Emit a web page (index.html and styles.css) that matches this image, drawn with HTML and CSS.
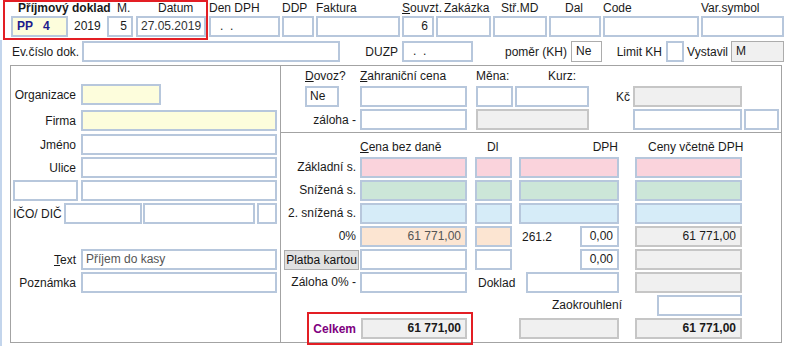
FILE: index.html
```html
<!DOCTYPE html>
<html lang="cs">
<head>
    <meta charset="UTF-8">
    <title>Příjmový doklad</title>
    <link rel="stylesheet" href="styles.css">
</head>
<body>
    <div class="top">
        <div class="doc">
            <span class="lbl title">Příjmový doklad</span>
            <span class="lbl mo">M.</span>
            <span class="lbl dt">Datum</span>
            <div class="f yel pp">PP&nbsp;&nbsp;&nbsp;4</div>
            <span class="year">2019</span>
            <div class="f num w26">5</div>
            <div class="f date">27.05.2019</div>
        </div>
        <div class="col"><div class="lbl">Den DPH</div><div class="f dots">.&nbsp;&nbsp;.</div></div>
        <div class="col"><div class="lbl">DDP</div><div class="f"></div></div>
        <div class="col"><div class="lbl">Faktura</div><div class="f"></div></div>
        <div class="col"><div class="lbl"><u>S</u>ouvzt.</div><div class="f num">6</div></div>
        <div class="col"><div class="lbl ind">Zakázka</div><div class="f"></div></div>
        <div class="col"><div class="lbl ind">Stř.MD</div><div class="f"></div></div>
        <div class="col"><div class="lbl ind2">Dal</div><div class="f"></div></div>
        <div class="col"><div class="lbl">Code</div><div class="f"></div></div>
        <div class="col"><div class="lbl">Var.symbol</div><div class="f"></div></div>
    </div>

    <div class="main">
        <div class="row2">
            <span class="rl ev">Ev.číslo dok.</span><div class="f w258"></div>
            <span class="rl w62">DUZP</span><div class="f w71 dots">.&nbsp;&nbsp;.</div>
            <span class="rl w98">poměr (KH)</span><div class="f thin w31">Ne</div>
            <span class="rl w64">Limit KH</span><div class="f w18"></div>
            <span class="rl w47">Vystavil</span><div class="f thin ro w53">M</div>
        </div>

        <div class="panels">
            <div class="left">
                <div class="row org"><span class="l">Organizace</span><div class="f yel w80"></div></div>
                <div class="row firma"><span class="l">Firma</span><div class="f yel w196"></div></div>
                <div class="row"><span class="l">Jméno</span><div class="f w196"></div></div>
                <div class="row"><span class="l">Ulice</span><div class="f w196"></div></div>
                <div class="row"><div class="f w65"></div><div class="f w196"></div></div>
                <div class="row ico">
                    <span class="icol">IČO/ DIČ</span>
                    <div class="f w78"></div><div class="f w112 ml1"></div><div class="f w20 ml2"></div>
                </div>
                <div class="row txt"><span class="l"><u>T</u>ext</span><div class="f w196 hint">Příjem do kasy</div></div>
                <div class="row"><span class="l">Poznámka</span><div class="f w196"></div></div>
            </div>

            <div class="right">
                <div class="upper">
                    <div class="urow heads">
                        <span class="w55"><u>D</u>ovoz?</span>
                        <span class="w116"><u>Z</u>ahraniční cena</span>
                        <span class="w72">Měna:</span>
                        <span>Kurz:</span>
                    </div>
                    <div class="urow">
                        <div class="f w34">Ne</div>
                        <div class="f w107 ml21"></div>
                        <div class="f w37 ml9"></div>
                        <div class="f w74 ml2"></div>
                        <span class="kc">Kč</span>
                        <div class="f ro w109"></div>
                    </div>
                    <div class="urow">
                        <span class="zl">záloha -</span>
                        <div class="f w107"></div>
                        <div class="f ro w113 ml9"></div>
                        <div class="f w109 ml44"></div>
                        <div class="f w35 ml2"></div>
                    </div>
                </div>

                <div class="lower">
                    <span class="hd a"><u>C</u>ena bez daně</span>
                    <span class="hd b dl">Dl</span>
                    <span class="hd c dph">DPH</span>
                    <span class="hd d cv">Ceny včetně DPH</span>

                    <span class="l">Základní s.</span>
                    <div class="f pink a"></div><div class="f pink b"></div>
                    <div class="f pink c"></div><div class="f pink d"></div>

                    <span class="l">Snížená s.</span>
                    <div class="f green a"></div><div class="f green b"></div>
                    <div class="f green c"></div><div class="f green d"></div>

                    <span class="l">2. snížená s.</span>
                    <div class="f blue a"></div><div class="f blue b"></div>
                    <div class="f blue c"></div><div class="f blue d"></div>

                    <span class="l">0%</span>
                    <div class="f peach num hint a">61 771,00</div>
                    <div class="f peach b"></div>
                    <div class="c split"><span>261.2</span><div class="f num w39">0,00</div></div>
                    <div class="f ro num d">61 771,00</div>

                    <button class="card">Platba kartou</button>
                    <div class="f a"></div><div class="f b"></div>
                    <div class="f num w39 c end">0,00</div>
                    <div class="f ro d"></div>

                    <span class="l">Záloha 0% -</span>
                    <div class="f a"></div>
                    <div class="doklad"><span>Doklad</span><div class="f w93"></div></div>
                    <div class="f ro d"></div>

                    <span class="zao">Zaokrouhlení</span>
                    <div class="f w85 d end"></div>

                    <div class="total"><span>Celkem</span><div class="f ro num w106">61 771,00</div></div>
                    <div class="f ro c"></div>
                    <div class="f ro num strong d">61 771,00</div>
                </div>
            </div>
        </div>
    </div>
</body>
</html>
```

FILE: styles.css
```css
* {
    box-sizing: border-box;
}

body {
    margin: 0;
    width: 789px;
    height: 346px;
    overflow: hidden;
    font: 12px "Liberation Sans", Arial, sans-serif;
    color: #1a1a1a;
    background: #fff;
}

u {
    text-decoration: underline;
}

/* fields */
.f {
    height: 21px;
    border: 2px solid #b7c7dc;
    background: #fff;
    line-height: 17px;
    padding: 0 3px;
    white-space: nowrap;
    overflow: hidden;
    flex-shrink: 0;
}

.f.num {
    text-align: right;
    padding-right: 4px;
}

.f.ro {
    background: #f0f0f0;
    border-color: #c6c6c6;
}

.f.thin {
    border: 1px solid #acacac;
    line-height: 19px;
    padding-left: 4px;
}

.f.yel { background: #fdfddc; }
.f.pink { background: #fad3dc; }
.f.green { background: #cce6d8; }
.f.blue { background: #d6ecf8; }
.f.peach { background: #fce5d2; }

.f.dots {
    padding-left: 9px;
}

.hint {
    color: #555;
}

.strong {
    font-weight: bold;
}

.w18 { width: 18px; }
.w20 { width: 20px; }
.w26 { width: 26px; }
.w31 { width: 31px; }
.w34 { width: 34px; }
.w35 { width: 35px; }
.w37 { width: 37px; }
.w39 { width: 39px; }
.w53 { width: 53px; }
.w65 { width: 65px; }
.w71 { width: 71px; }
.w74 { width: 74px; }
.w78 { width: 78px; }
.w80 { width: 80px; }
.w85 { width: 85px; }
.w93 { width: 93px; }
.w106 { width: 106px; }
.w107 { width: 107px; }
.w109 { width: 109px; }
.w112 { width: 112px; }
.w113 { width: 113px; }
.w196 { width: 196px; }
.w258 { width: 258px; }

.ml1 { margin-left: 1px; }
.ml2 { margin-left: 2px; }
.ml9 { margin-left: 9px; }
.ml21 { margin-left: 21px; }
.ml44 { margin-left: 44px; }

/* header row */
.top {
    display: grid;
    grid-template-columns: 206px 73px 34px 86px 34px 57px 56px 54px 98px 85px;
    padding-left: 3px;
    height: 40px;
}

.lbl {
    height: 14px;
    line-height: 12px;
    white-space: nowrap;
}

.doc {
    width: 205px;
    height: 40px;
    border: 2px solid #e31e24;
    padding-left: 6px;
    display: grid;
    grid-template-columns: 57px 39px 29px 70px;
    grid-template-rows: 14px 21px;
}

.doc .title {
    grid-column: 1 / 3;
    padding-left: 7px;
    font-weight: bold;
}

.doc .mo {
    padding-left: 10px;
}

.doc .dt {
    padding-left: 22px;
}

.pp {
    font-weight: bold;
    color: #1c1c8c;
    padding-left: 4px;
}

.year {
    line-height: 21px;
    padding-left: 6px;
}

.date {
    color: #333;
}

.col {
    padding-top: 2px;
}

.col .f {
    width: calc(100% - 2px);
}

.col .ind {
    padding-left: 8px;
}

.col .ind2 {
    padding-left: 16px;
}

/* main part */
.main {
    border-left: 2px solid #c3d5ec;
    padding-top: 1px;
    height: 306px;
}

.row2 {
    display: flex;
    align-items: center;
    height: 21px;
}

.rl {
    flex-shrink: 0;
    text-align: right;
    padding-right: 4px;
    white-space: nowrap;
}

.rl.ev {
    width: 80px;
    text-align: left;
    padding-left: 10px;
}

.w47 { width: 47px; }
.w62 { width: 62px; }
.w64 { width: 64px; }
.w98 { width: 98px; }
.rl.w47 { padding-right: 3px; }

.panels {
    display: flex;
    margin: 3px 0 0 8px;
    height: 278px;
}

.left {
    width: 271px;
    border: 1px solid #a3a3a3;
    padding: 18px 0 0 2px;
    display: flex;
    flex-direction: column;
    gap: 2px;
}

.row {
    display: flex;
    align-items: center;
    gap: 3px;
    height: 21px;
}

.row .l {
    width: 65px;
    text-align: right;
    padding-right: 2px;
    white-space: nowrap;
}

.row.org {
    margin-bottom: 3px;
}

.row.firma {
    margin-bottom: 1px;
}

.row.ico {
    gap: 0;
}

.icol {
    width: 51px;
    white-space: nowrap;
}

.row.txt {
    margin-top: 23px;
}

.right {
    width: 501px;
    border: 1px solid #a3a3a3;
    border-left: none;
}

.upper {
    height: 67px;
    border-bottom: 1px solid #a3a3a3;
    padding: 4px 0 0 24px;
}

.urow {
    display: flex;
    align-items: center;
    height: 21px;
    margin-bottom: 2px;
}

.urow.heads {
    height: 14px;
    line-height: 12px;
    align-items: flex-start;
}

.urow span {
    flex-shrink: 0;
    white-space: nowrap;
}

.w55 { width: 55px; }
.w72 { width: 72px; }
.w116 { width: 116px; }

.kc {
    width: 44px;
    text-align: right;
    padding-right: 3px;
}

.zl {
    width: 55px;
    text-align: right;
    padding-right: 4px;
}

.lower {
    display: grid;
    grid-template-columns: 79px 107px 8px 37px 7px 100px 16px 107px;
    grid-auto-rows: 21px;
    row-gap: 2px;
    padding-top: 1px;
}

.lower .a { grid-column: 2; }
.lower .b { grid-column: 4; }
.lower .c { grid-column: 6; }
.lower .d { grid-column: 8; }

.lower .l {
    grid-column: 1;
    text-align: right;
    padding-right: 4px;
    line-height: 21px;
    white-space: nowrap;
}

.hd {
    align-self: end;
    line-height: 14px;
    padding-bottom: 1px;
    white-space: nowrap;
}

.hd.dl { padding-left: 12px; }
.hd.dph { text-align: right; padding-right: 1px; }
.hd.cv { padding-left: 13px; }

.end {
    justify-self: end;
}

.split {
    display: flex;
    justify-content: space-between;
    align-items: center;
    padding-left: 3px;
}

.card {
    grid-column: 1;
    justify-self: end;
    align-self: end;
    width: 75px;
    height: 20px;
    margin-right: 1px;
    padding: 0;
    border: 1px solid #adadad;
    background: #e1e1e1;
    font: 12px "Liberation Sans", Arial, sans-serif;
    color: #111;
    white-space: nowrap;
}

.doklad {
    grid-column: 4 / 7;
    display: flex;
    justify-content: space-between;
    align-items: center;
    padding-left: 3px;
}

.zao {
    grid-column: 6 / 8;
    text-align: right;
    padding-right: 13px;
    line-height: 21px;
}

.total {
    grid-column: 1 / 3;
    justify-self: end;
    display: flex;
    align-items: center;
    gap: 5px;
    outline: 2px solid #e31e24;
    outline-offset: 4px;
}

.total span {
    font-weight: bold;
    color: #800080;
}

.total .f {
    font-weight: bold;
}
```
